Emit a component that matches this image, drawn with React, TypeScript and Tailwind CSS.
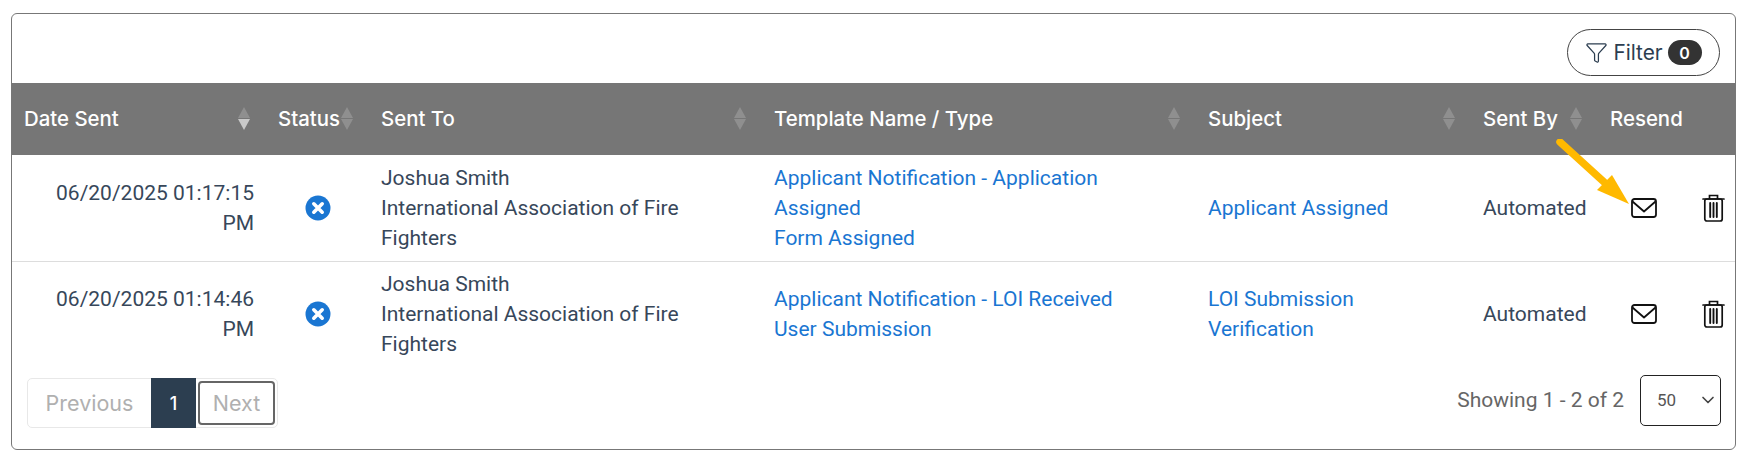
import { ChevronDown, Filter } from "lucide-react";

const heading = "font-['Inter','Open_Sans',sans-serif]";

const rows = [
  {
    date: "06/20/2025 01:17:15 PM",
    to: ["Joshua Smith", "International Association of Fire Fighters"],
    template: ["Applicant Notification - Application Assigned", "Form Assigned"],
    subject: "Applicant Assigned",
  },
  {
    date: "06/20/2025 01:14:46 PM",
    to: ["Joshua Smith", "International Association of Fire Fighters"],
    template: ["Applicant Notification - LOI Received", "User Submission"],
    subject: "LOI Submission Verification",
  },
];

function SortArrows({ active }: { active?: boolean }) {
  return (
    <span className="absolute right-[16px] top-[24px] flex flex-col gap-[1px]">
      <span className="h-0 w-0 border-x-[6px] border-b-[11px] border-x-transparent border-b-[#8f8f8f]" />
      <span
        className={
          active
            ? "h-0 w-0 border-x-[6px] border-t-[11px] border-x-transparent border-t-[#c9c9c9]"
            : "h-0 w-0 border-x-[6px] border-t-[11px] border-x-transparent border-t-[#8f8f8f]"
        }
      />
    </span>
  );
}

function Th({ label, active, sortable = true }: { label: string; active?: boolean; sortable?: boolean }) {
  return (
    <th className="relative px-3 text-left text-[20.4px] font-medium whitespace-nowrap text-white">
      {label}
      {sortable && <SortArrows active={active} />}
    </th>
  );
}

function StatusIcon() {
  return (
    <svg width="26" height="26" viewBox="0 0 26 26" className="mx-auto">
      <circle cx="13" cy="13" r="12.5" fill="#1a76d2" />
      <path d="M8.8 8.8l8.4 8.4M17.2 8.8l-8.4 8.4" stroke="#fff" strokeWidth="3.6" strokeLinecap="round" />
    </svg>
  );
}

function MailIcon() {
  return (
    <svg width="26" height="20" viewBox="0 0 26 20" fill="none" stroke="#111" strokeWidth="1.8">
      <rect x="1" y="1" width="24" height="18" rx="2.5" />
      <path d="M1.5 3.5l11.5 10 11.5-10" strokeLinejoin="round" />
    </svg>
  );
}

function TrashIcon() {
  return (
    <svg width="23" height="28" viewBox="0 0 23 28" fill="none" stroke="#111" strokeWidth="1.7" strokeLinecap="round">
      <path d="M1 5h21M7.5 4.5V1.5h8v3" />
      <rect x="2.8" y="5" width="17.4" height="22" rx="2" />
      <path d="M8.2 9v14M11.5 9v14M14.8 9v14" strokeWidth="1.9" />
    </svg>
  );
}

export default function App() {
  return (
    <div className="h-[464px] w-[1748px] bg-white pt-[13px] pl-[11px] font-['Roboto',sans-serif]">
      <div className="relative h-[437px] w-[1725px] rounded-[6px] border border-[#777]">
        <div className="flex h-[69px] items-start justify-end pt-[15px] pr-[15px]">
          <button
            className={`flex h-[47px] w-[153px] items-center justify-center gap-[5px] rounded-full border border-[#444] text-[20.8px] text-[#2c3e50] ${heading}`}
          >
            <Filter size={23} strokeWidth={1.3} className="text-[#2c3e50]" />
            Filter
            <span className="flex h-[25px] w-[34px] items-center justify-center rounded-full bg-[#333] text-[16px] font-semibold text-white">
              0
            </span>
          </button>
        </div>

        <table className="w-full table-fixed border-collapse text-[21px] leading-[30px] text-[#37475a]">
          <colgroup>
            <col className="w-[254px]" />
            <col className="w-[103px]" />
            <col className="w-[393px]" />
            <col className="w-[434px]" />
            <col className="w-[275px]" />
            <col className="w-[127px]" />
            <col />
          </colgroup>
          <thead className={heading}>
            <tr className="h-[72px] bg-[#767676]">
              <Th label="Date Sent" active />
              <Th label="Status" />
              <Th label="Sent To" />
              <Th label="Template Name / Type" />
              <Th label="Subject" />
              <Th label="Sent By" />
              <Th label="Resend" sortable={false} />
            </tr>
          </thead>
          <tbody>
            {rows.map((row) => (
              <tr key={row.date} className="h-[106px] border-b border-[#ddd] last:border-b-0">
                <td className="px-3 text-right">{row.date}</td>
                <td className="px-3">
                  <StatusIcon />
                </td>
                <td className="px-3">
                  {row.to.map((line) => (
                    <div key={line}>{line}</div>
                  ))}
                </td>
                <td className="px-3 text-[#1a76d2]">
                  {row.template.map((line) => (
                    <div key={line}>{line}</div>
                  ))}
                </td>
                <td className="px-3 text-[#1a76d2]">{row.subject}</td>
                <td className="px-3">Automated</td>
                <td className="pr-[10px] pl-[33px]">
                  <div className="flex items-center justify-between">
                    <MailIcon />
                    <TrashIcon />
                  </div>
                </td>
              </tr>
            ))}
          </tbody>
        </table>

        <div className="flex items-start justify-between pt-[8px] pr-[14px] pl-[15px]">
          <div className={`mt-[3px] flex h-[50px] items-center rounded-[5px] border border-[#e8e8e8] text-[21.5px] text-[#b0b0b0] ${heading}`}>
            <span className="w-[123px] text-center">Previous</span>
            <span className="flex h-[50px] w-[45px] items-center justify-center bg-[#2c3e50] text-[18px] font-medium text-white">
              1
            </span>
            <span className="ml-[2px] flex h-[44px] w-[77px] items-center justify-center rounded-[4px] border-[2.5px] border-[#666]">
              Next
            </span>
            <span className="w-[2px]" />
          </div>
          <div className="flex items-center gap-[16px] text-[21px] text-[#666]">
            <span>Showing 1 - 2 of 2</span>
            <div className="relative">
              <select className="h-[51px] w-[81px] appearance-none rounded-[5px] border border-[#222] bg-white pl-[16px] text-[17px] text-[#555]">
                <option>50</option>
              </select>
              <ChevronDown size={20} strokeWidth={2} className="pointer-events-none absolute top-[15px] right-[3px] text-[#444]" />
            </div>
          </div>
        </div>

        <svg className="absolute top-[125px] left-[1538px]" width="100" height="90" viewBox="0 0 100 90">
          <path d="M10 3L54 43" stroke="#ffb900" strokeWidth="7.5" strokeLinecap="round" />
          <path d="M79 65L47 51L62 36Z" fill="#ffb900" />
        </svg>
      </div>
    </div>
  );
}
